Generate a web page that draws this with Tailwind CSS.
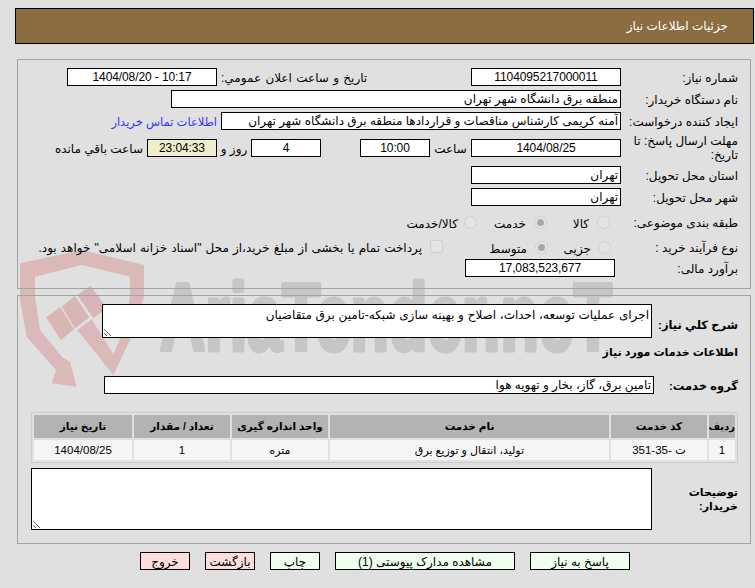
<!DOCTYPE html>
<html dir="rtl" lang="fa">
<head>
<meta charset="utf-8">
<script src="https://cdn.jsdelivr.net/npm/@tailwindcss/browser@4"></script>
</head>
<body class="relative w-[755px] h-[588px] overflow-hidden bg-[#e0e0e0] text-[12px] leading-[14px] text-black font-['Liberation_Sans','DejaVu_Sans',sans-serif]">
<!-- watermark -->
<svg class="absolute left-[20px] top-[230px]" width="260" height="190" viewBox="0 0 780 570" aria-hidden="true">
  <path fill="#dcb9b9" d="M0 100 L185 60 L372 105 L372 200 L330 330 L280 435 L172 300 L215 268 L280 372 L315 290 L330 200 L330 140 L185 105 L45 140 L45 200 L60 300 L128 383 L150 395 L170 470 L95 460 L108 420 L20 320 L0 210 Z"/>
  <path fill="#d9b6b6" d="M78 262 L120 232 L163 297 L122 330 Z M125 230 L165 198 L208 262 L165 295 Z M172 195 L212 167 L260 235 L220 265 Z"/>
</svg>
<svg class="absolute left-[150px] top-[260px] [direction:ltr]" width="480" height="110" viewBox="0 0 480 110" aria-hidden="true">
  <text x="10" y="90" direction="ltr" textLength="452" lengthAdjust="spacingAndGlyphs" fill="#c6c6c6" stroke="#c6c6c6" stroke-width="5" stroke-linejoin="round" font-size="95" font-weight="700" font-family="Liberation Sans Narrow, Liberation Sans, sans-serif">AriaTender.neT</text>
</svg>

<div class="relative pt-2">
  <!-- header -->
  <div class="ml-[15px] mr-[1px] h-[36px] border border-black bg-[#8c6d42] flex items-center pr-[25px] text-white text-[12px]">جزئیات اطلاعات نیاز</div>

  <!-- panel 1 -->
  <div class="mt-[15px] ml-[17px] mr-[4px] h-[230px] border border-[#a3a3a3] pt-[8px] pr-[12px]">
    <div class="flex h-[18px]">
      <div class="w-[117px] shrink-0 leading-[20px]">شماره نیاز:</div>
      <div class="w-[150px] h-[18px] shrink-0 border border-black bg-white text-center leading-[16px] tracking-[-0.1px]">1104095217000011</div>
      <div class="w-[254px] shrink-0 leading-[20px] text-left pl-[4px] [word-spacing:1px]">تاریخ و ساعت اعلان عمومي:</div>
      <div dir="ltr" class="w-[150px] h-[18px] shrink-0 border border-black bg-white text-center leading-[16px] tracking-[-0.1px]">1404/08/20 - 10:17</div>
    </div>
    <div class="flex h-[18px] mt-[4px]">
      <div class="w-[117px] shrink-0 leading-[20px]">نام دستگاه خریدار:</div>
      <div class="w-[450px] h-[18px] shrink-0 border border-black bg-white px-[2px] leading-[16px]">منطقه برق دانشگاه شهر تهران</div>
    </div>
    <div class="flex h-[18px] mt-[4px]">
      <div class="w-[117px] shrink-0 leading-[20px]">ایجاد کننده درخواست:</div>
      <div class="w-[400px] h-[18px] shrink-0 border border-black bg-white px-[2px] leading-[16px] whitespace-nowrap overflow-hidden">آمنه کریمی کارشناس مناقصات و قراردادها منطقه برق دانشگاه شهر تهران</div>
      <a class="mr-[4px] leading-[20px] text-[11.5px] text-[#3333ff] whitespace-nowrap">اطلاعات تماس خریدار</a>
    </div>
    <div class="flex h-[28px] mt-[4px]">
      <div class="w-[117px] shrink-0 leading-[14px] pl-[4px]">مهلت ارسال پاسخ: تا تاریخ:</div>
      <div class="w-[150px] h-[18px] mt-[5px] shrink-0 border border-black bg-white text-center leading-[16px] tracking-[-0.1px]">1404/08/25</div>
      <div class="w-[41px] shrink-0 mt-[5px] leading-[20px] text-center">ساعت</div>
      <div class="w-[70px] h-[18px] mt-[5px] shrink-0 border border-black bg-white text-center leading-[16px] tracking-[-0.1px]">10:00</div>
      <div class="w-[39px] shrink-0"></div>
      <div class="w-[70px] h-[18px] mt-[5px] shrink-0 border border-black bg-white text-center leading-[16px] tracking-[-0.1px]">4</div>
      <div class="w-[34px] shrink-0 mt-[5px] leading-[20px] text-center">روز و</div>
      <div class="w-[70px] h-[18px] mt-[5px] shrink-0 border border-black bg-[#eeeecc] text-center leading-[16px] tracking-[-0.1px]">23:04:33</div>
      <div class="mr-[4px] mt-[5px] leading-[20px] whitespace-nowrap">ساعت باقي مانده</div>
    </div>
    <div class="flex h-[18px] mt-[4px]">
      <div class="w-[117px] shrink-0 leading-[20px]">استان محل تحویل:</div>
      <div class="w-[150px] h-[18px] shrink-0 border border-black bg-white px-[2px] leading-[16px]">تهران</div>
    </div>
    <div class="flex h-[18px] mt-[4px]">
      <div class="w-[117px] shrink-0 leading-[20px]">شهر محل تحویل:</div>
      <div class="w-[150px] h-[18px] shrink-0 border border-black bg-white px-[2px] leading-[16px]">تهران</div>
    </div>
    <div class="flex h-[24px] mt-[4px] items-center">
      <div class="w-[128px] shrink-0 mt-[1px]">طبقه بندی موضوعی:</div>
      <div class="w-[63px] shrink-0 flex items-center gap-[8px]"><span class="size-[13px] rounded-full border border-[#cfcfcf] bg-[#e4e4e4]"></span><span class="mt-[3px]">کالا</span></div>
      <div class="w-[70px] shrink-0 flex items-center gap-[8px]"><span class="size-[13px] rounded-full border border-[#cfcfcf] bg-[#e4e4e4] flex items-center justify-center"><span class="size-[7px] rounded-full bg-[#a8a8a8]"></span></span><span class="mt-[3px]">خدمت</span></div>
      <div class="flex items-center gap-[6px]"><span class="size-[13px] rounded-full border border-[#cfcfcf] bg-[#e4e4e4]"></span><span class="mt-[3px]">کالا/خدمت</span></div>
    </div>
    <div class="flex h-[24px] mt-[1px] items-center">
      <div class="w-[127px] shrink-0 mt-[1px]">نوع فرآیند خرید :</div>
      <div class="w-[63px] shrink-0 flex items-center gap-[7px]"><span class="size-[13px] rounded-full border border-[#cfcfcf] bg-[#e4e4e4]"></span><span class="mt-[3px]">جزیی</span></div>
      <div class="w-[105px] shrink-0 flex items-center gap-[8px]"><span class="size-[13px] rounded-full border border-[#cfcfcf] bg-[#e4e4e4] flex items-center justify-center"><span class="size-[7px] rounded-full bg-[#a8a8a8]"></span></span><span class="mt-[3px]">متوسط</span></div>
      <div class="flex items-center gap-[8px] whitespace-nowrap"><span class="size-[13px] -mt-[2px] rounded-[2px] border border-[#cfcfcf] bg-[#e4e4e4]"></span><span class="mt-[1px] [word-spacing:0.8px]">پرداخت تمام یا بخشی از مبلغ خرید،از محل "اسناد خزانه اسلامی" خواهد بود.</span></div>
    </div>
    <div class="flex h-[18px]">
      <div class="w-[123px] shrink-0 leading-[20px]">برآورد مالی:</div>
      <div class="w-[150px] h-[18px] shrink-0 border border-black bg-white text-center leading-[16px] tracking-[-0.1px]">17,083,523,677</div>
    </div>
  </div>

  <!-- panel 2 -->
  <div class="mt-[6px] ml-[17px] mr-[4px] h-[249px] border border-[#a3a3a3] pr-[12px] pt-[8px]">
    <div class="flex h-[34px]">
      <div class="w-[86px] shrink-0 mt-[14px] font-bold text-[11.5px] whitespace-nowrap">شرح کلي نیاز:</div>
      <textarea readonly class="w-[550px] h-[34px] shrink-0 border border-black bg-white px-[2px] py-[3px] leading-[14px] text-[12px] [word-spacing:0.4px]">اجرای عملیات توسعه، احداث، اصلاح و بهینه سازی شبکه-تامین برق متقاضیان</textarea>
    </div>
    <div class="mt-[7px] h-[14px] font-bold text-[11px]">اطلاعات خدمات مورد نیاز</div>
    <div class="flex h-[18px] mt-[17px]">
      <div class="w-[84px] shrink-0 mt-[3px] font-bold text-[11.5px]">گروه خدمت:</div>
      <div class="w-[550px] h-[18px] shrink-0 border border-black bg-white px-[2px] leading-[16px]">تامین برق، گاز، بخار و تهویه هوا</div>
    </div>
    <div class="mt-[18px] w-[707px] border border-[#cccccc] p-[2px] grid grid-cols-[26px_96px_279px_96px_96px_98px] grid-rows-[23px_20px] gap-[2px] text-center">
      <div class="bg-[#b3b3b3] font-bold leading-[23px] text-[10px] whitespace-nowrap">ردیف</div>
      <div class="bg-[#b3b3b3] font-bold leading-[23px] text-[10.5px]">کد خدمت</div>
      <div class="bg-[#b3b3b3] font-bold leading-[23px] text-[10.5px]">نام خدمت</div>
      <div class="bg-[#b3b3b3] font-bold leading-[23px] text-[10.5px]">واحد اندازه گیری</div>
      <div class="bg-[#b3b3b3] font-bold leading-[23px] text-[10.5px]">تعداد / مقدار</div>
      <div class="bg-[#b3b3b3] font-bold leading-[23px] text-[10.5px]">تاریخ نیاز</div>
      <div class="bg-[#f5f5f5] leading-[20px] text-[11.5px]">1</div>
      <div class="bg-[#f5f5f5] leading-[20px] text-[11.5px]">ت -35-351</div>
      <div class="bg-[#f5f5f5] leading-[20px] text-[11px]">تولید، انتقال و توزیع برق</div>
      <div class="bg-[#f5f5f5] leading-[20px] text-[11px]">متره</div>
      <div class="bg-[#f5f5f5] leading-[20px] text-[11.5px]">1</div>
      <div class="bg-[#f5f5f5] leading-[20px] text-[11.5px]">1404/08/25</div>
    </div>
    <div class="flex mt-[5px]">
      <div class="w-[86px] shrink-0 mt-[17px] font-bold text-[11px] leading-[14px]">توضیحات خریدار:</div>
      <textarea readonly class="w-[621px] h-[62px] shrink-0 border border-black bg-white"></textarea>
    </div>
  </div>

  <!-- buttons -->
  <div class="mt-[8px] mr-[125px] flex gap-[15px] text-[12px]">
    <div class="w-[100px] h-[18px] border border-black bg-[#eeffee] text-center leading-[18px]">پاسخ به نیاز</div>
    <div class="w-[180px] h-[18px] border border-black bg-[#eeffee] text-center leading-[18px]">مشاهده مدارک پیوستی (1)</div>
    <div class="w-[50px] h-[18px] border border-black bg-[#eeffee] text-center leading-[18px]">چاپ</div>
    <div class="w-[50px] h-[18px] border border-black bg-[#ffdddd] text-center leading-[18px]">بازگشت</div>
    <div class="w-[50px] h-[18px] border border-black bg-[#ffdddd] text-center leading-[18px]">خروج</div>
  </div>
</div>
</body>
</html>
